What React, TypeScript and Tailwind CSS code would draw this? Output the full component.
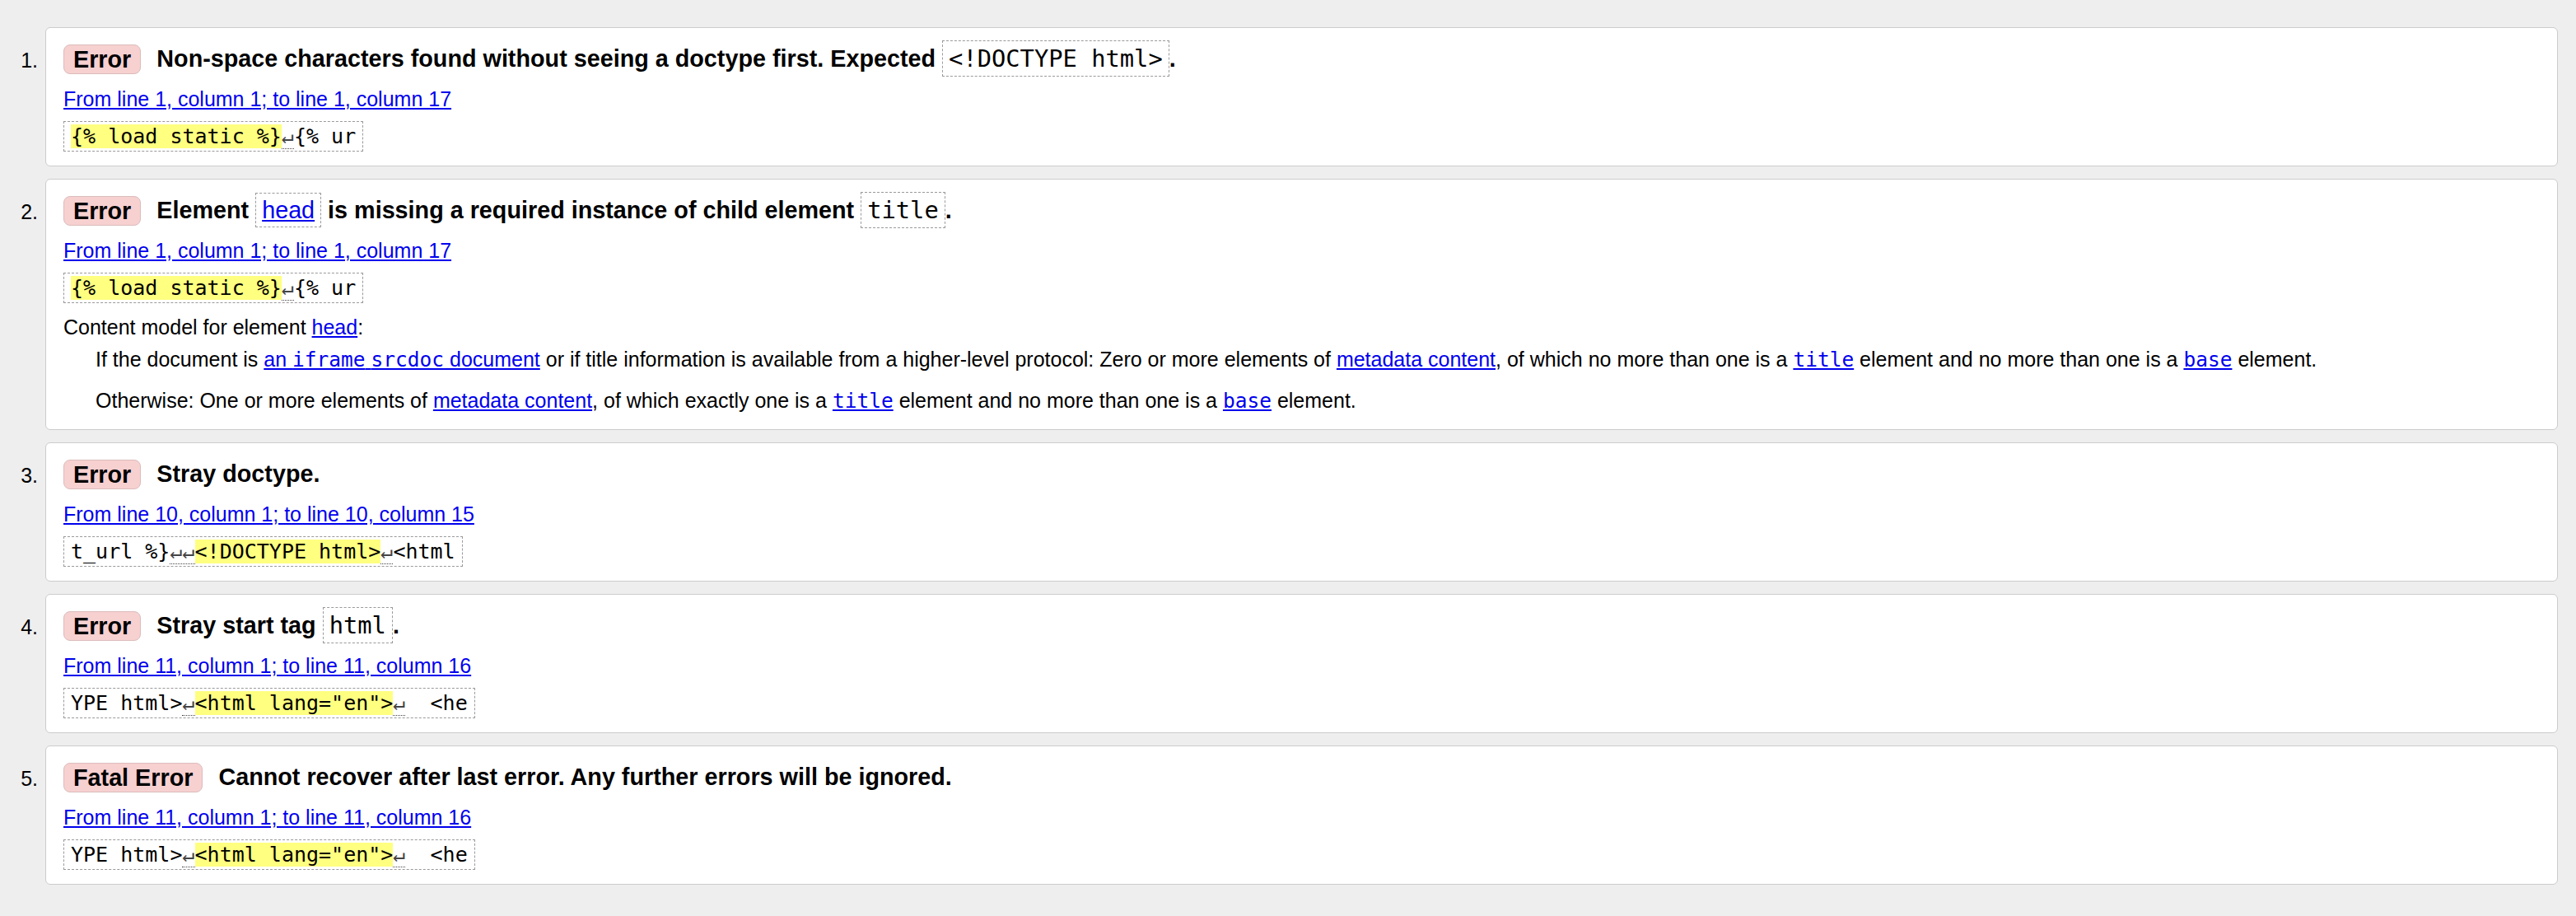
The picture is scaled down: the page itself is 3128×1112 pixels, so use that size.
import React from 'react';

const sans = "font-['Liberation_Sans',Arial,sans-serif]";
const mono = "font-['DejaVu_Sans_Mono','Liberation_Mono',monospace]";

type Piece = { text: string; kind?: 'hl' | 'nl' };

function Badge({ label }: { label: string }) {
  return (
    <span className="shrink-0 rounded-[8px] border border-[#dcbcbc] bg-[#f7d0d0] px-[11px] text-[28.75px] font-bold leading-[34px] text-black">
      {label}
    </span>
  );
}

function HeadCode({ children, link }: { children: React.ReactNode; link?: boolean }) {
  if (link) {
    return (
      <span className="border border-dashed border-[#9a9a9a] px-[7px] py-[4px] font-normal">
        <a href="#" className="text-[#0000ee] underline">{children}</a>
      </span>
    );
  }
  return (
    <code className={`${mono} border border-dashed border-[#9a9a9a] px-[7px] py-[4px] font-normal text-[28.75px]`}>
      {children}
    </code>
  );
}

function Extract({ pieces }: { pieces: Piece[] }) {
  return (
    <div className={`${mono} mt-[12px] w-fit border border-dashed border-[#9a9a9a] px-[8px] py-[3px] text-[25px] leading-[29px] whitespace-pre text-black`}>
      {pieces.map((p, i) =>
        p.kind === 'hl' ? (
          <span key={i} className="bg-[#ffff80]">{p.text}</span>
        ) : p.kind === 'nl' ? (
          <span key={i} className="border-b border-dotted border-[#444] text-[#444]">{p.text}</span>
        ) : (
          <span key={i}>{p.text}</span>
        )
      )}
    </div>
  );
}

function Item({
  n,
  badge = 'Error',
  heading,
  location,
  pieces,
  extra,
}: {
  n: number;
  badge?: string;
  heading: React.ReactNode;
  location: string;
  pieces: Piece[];
  extra?: React.ReactNode;
}) {
  return (
    <li className="flex">
      <div className="w-[55px] shrink-0 pr-[9px] pt-[26px] text-right text-[25px] leading-[29px] text-black">{n}.</div>
      <div className="flex-1 rounded-[6px] border border-[#cccccc] bg-white px-[21px] pt-[16px] pb-[17px]">
        <div className="flex h-[43px] items-center gap-[19px]">
          <Badge label={badge} />
          <p className="text-[28.75px] font-bold text-black whitespace-nowrap">{heading}</p>
        </div>
        <p className="mt-[13px] text-[25px] leading-[29px]">
          <a href="#" className="text-[#0000ee] underline">{location}</a>
        </p>
        <Extract pieces={pieces} />
        {extra}
      </div>
    </li>
  );
}

function MonoLink({ children }: { children: React.ReactNode }) {
  return (
    <a href="#" className="text-[#0000ee] underline">
      <code className={`${mono} text-[24.5px]`}>{children}</code>
    </a>
  );
}

function Link({ children }: { children: React.ReactNode }) {
  return (
    <a href="#" className="text-[#0000ee] underline">{children}</a>
  );
}

export default function App() {
  const contentModel = (
    <dl className="mt-[15px] mb-[3px] text-[25px] leading-[29px] text-black">
      <dt>
        Content model for element <Link>head</Link>:
      </dt>
      <dd className="mt-[10px] ml-[39px]">
        If the document is{' '}
        <a href="#" className="text-[#0000ee] underline">
          an <code className={`${mono} text-[24.5px]`}>iframe</code> <code className={`${mono} text-[24.5px]`}>srcdoc</code> document
        </a>{' '}
        or if title information is available from a higher-level protocol: Zero or more elements of{' '}
        <Link>metadata content</Link>, of which no more than one is a <MonoLink>title</MonoLink> element and no more than one is a{' '}
        <MonoLink>base</MonoLink> element.
      </dd>
      <dd className="mt-[21px] ml-[39px]">
        Otherwise: One or more elements of <Link>metadata content</Link>, of which exactly one is a{' '}
        <MonoLink>title</MonoLink> element and no more than one is a <MonoLink>base</MonoLink> element.
      </dd>
    </dl>
  );

  const line11: Piece[] = [
    { text: 'YPE html>' },
    { text: '↵', kind: 'nl' },
    { text: '<html lang="en">', kind: 'hl' },
    { text: '↵', kind: 'nl' },
    { text: '  <he' },
  ];

  return (
    <div className={`${sans} min-h-screen bg-[#eeeeee] pt-[33px] pr-[22px] pb-[30px]`}>
      <ol className="flex flex-col gap-[15px]">
        <Item
          n={1}
          heading={
            <>
              Non-space characters found without seeing a doctype first. Expected <HeadCode>&lt;!DOCTYPE html&gt;</HeadCode>.
            </>
          }
          location="From line 1, column 1; to line 1, column 17"
          pieces={[
            { text: '{% load static %}', kind: 'hl' },
            { text: '↵', kind: 'nl' },
            { text: '{% ur' },
          ]}
        />
        <Item
          n={2}
          heading={
            <>
              Element <HeadCode link>head</HeadCode> is missing a required instance of child element <HeadCode>title</HeadCode>.
            </>
          }
          location="From line 1, column 1; to line 1, column 17"
          pieces={[
            { text: '{% load static %}', kind: 'hl' },
            { text: '↵', kind: 'nl' },
            { text: '{% ur' },
          ]}
          extra={contentModel}
        />
        <Item
          n={3}
          heading="Stray doctype."
          location="From line 10, column 1; to line 10, column 15"
          pieces={[
            { text: 't_url %}' },
            { text: '↵↵', kind: 'nl' },
            { text: '<!DOCTYPE html>', kind: 'hl' },
            { text: '↵', kind: 'nl' },
            { text: '<html' },
          ]}
        />
        <Item
          n={4}
          heading={
            <>
              Stray start tag <HeadCode>html</HeadCode>.
            </>
          }
          location="From line 11, column 1; to line 11, column 16"
          pieces={line11}
        />
        <Item
          n={5}
          badge="Fatal Error"
          heading="Cannot recover after last error. Any further errors will be ignored."
          location="From line 11, column 1; to line 11, column 16"
          pieces={line11}
        />
      </ol>
    </div>
  );
}
